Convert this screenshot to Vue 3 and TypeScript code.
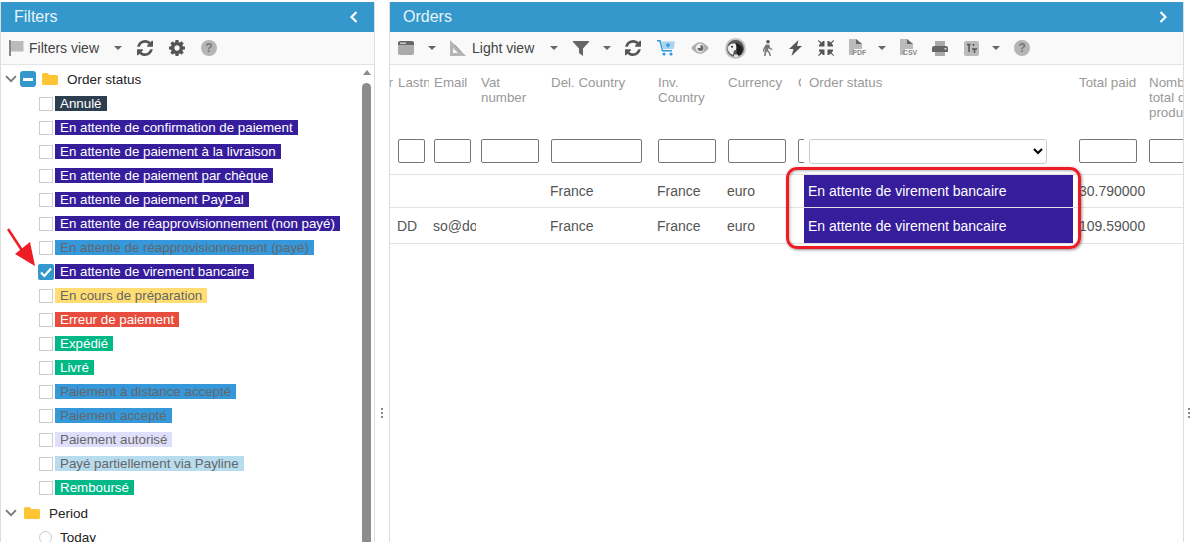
<template>
  <div class="page">
    <section class="panel filters">
      <header class="panel-head">
        <span>Filters</span>
        <svg class="head-chevron" width="8" height="12" viewBox="0 0 8 12"><path d="M6.5 1 1.5 6l5 5" fill="none" stroke="#fff" stroke-width="2.2" /></svg>
      </header>
      <div class="toolbar">
        <span class="tool flag">
          <svg width="15" height="16" viewBox="0 0 15 16"><path d="M0 0h2v16H0z" fill="#888" /><path d="M2 1h12.500v10.500H2z" fill="#bbb" /></svg>
        </span>
        <span class="view-name first">Filters view</span>
        <i class="caret" />
        <span class="tool">
          <svg width="16" height="16" viewBox="0 0 1536 1536"><path :d="refreshPath" fill="#555" /></svg>
        </span>
        <span class="tool">
          <svg width="16" height="16" viewBox="0 0 1536 1536"><path :d="gearPath" fill="#555" /></svg>
        </span>
        <span class="tool"><b class="help">?</b></span>
      </div>
      <div class="tree-wrap">
        <div class="tree">
          <div class="group-row">
            <svg class="tree-chevron" width="12" height="8" viewBox="0 0 12 8"><path d="M1 1.2 6 6.2l5-5" fill="none" stroke="#777" stroke-width="1.8" /></svg>
            <span class="check partial"><i /></span>
            <svg class="folder" width="16" height="12" viewBox="0 0 16 12"><path :d="folderPath" fill="#fdc536" /></svg>
            <span class="group-name">Order status</span>
          </div>
          <div v-for="s in statuses" :key="s.label" class="status-row">
            <span v-if="s.checked" class="check on">
              <svg width="16" height="16" viewBox="0 0 16 16"><path d="M3 8.500 6.400 12 13 4.500" fill="none" stroke="#fff" stroke-width="2.200" /></svg>
            </span>
            <span v-else class="check" />
            <span class="status-label" :class="s.kind">{{ s.label }}</span>
          </div>
          <div class="group-row period">
            <svg class="tree-chevron" width="12" height="8" viewBox="0 0 12 8"><path d="M1 1.2 6 6.2l5-5" fill="none" stroke="#777" stroke-width="1.8" /></svg>
            <svg class="folder" width="16" height="12" viewBox="0 0 16 12"><path :d="folderPath" fill="#fdc536" /></svg>
            <span class="group-name">Period</span>
          </div>
          <div class="radio-row"><i class="radio" /><span>Today</span></div>
        </div>
        <div class="scrollbar">
          <i class="scroll-up" />
          <i class="scroll-thumb" />
        </div>
      </div>
    </section>

    <div class="splitter"><i /><i /><i /></div>

    <section class="panel orders">
      <header class="panel-head">
        <span>Orders</span>
        <svg class="head-chevron" width="8" height="12" viewBox="0 0 8 12"><path d="M1.500 1l5 5-5 5" fill="none" stroke="#fff" stroke-width="2.200" /></svg>
      </header>
      <div class="toolbar">
        <span class="tool">
          <svg width="16" height="14" viewBox="0 0 16 14"><path d="M2 0h12a2 2 0 0 1 2 2v2.500H0V2a2 2 0 0 1 2-2z" fill="#666" /><path d="M0 5h16v7a2 2 0 0 1-2 2H2a2 2 0 0 1-2-2z" fill="#aaa" /><path d="M2 1.600h6v1.300H2z" fill="#ddd" /></svg>
        </span>
        <i class="caret near" />
        <span class="tool square">
          <svg width="16" height="16" viewBox="0 0 16 16"><path d="M0 0 16 16H0zM3 8v5h5z" fill="#b5b5b5" fill-rule="evenodd" /><path d="M5 5 11 12" stroke="#888" stroke-width=".8" /></svg>
        </span>
        <span class="view-name">Light view</span>
        <i class="caret" />
        <span class="tool">
          <svg width="16" height="15" viewBox="0 0 16 15"><path d="M0 0h16v1l-6 6.500V15l-4-3V7.500L0 1z" fill="#666" /></svg>
        </span>
        <i class="caret near" />
        <span class="tool">
          <svg width="16" height="16" viewBox="0 0 1536 1536"><path :d="refreshPath" fill="#555" /></svg>
        </span>
        <span class="tool">
          <svg width="18" height="16" viewBox="0 0 18 16"><path d="M0 .8h3l2.500 10h9.500" fill="none" stroke="#3498db" stroke-width="1.500" /><path d="M4 1.500h14l-1.500 7.500H5.500z" fill="#a9d3ee" /><path d="M10.300 3h1.400v1.500H13v1.400h-1.300v1.500h-1.400V5.900H9V4.500h1.300z" fill="#3498db" /><circle cx="7" cy="14" r="1.600" fill="#3498db" /><circle cx="14" cy="14" r="1.600" fill="#3498db" /></svg>
        </span>
        <span class="tool">
          <svg width="18" height="14" viewBox="0 0 18 14"><path d="M0 7q9-11.500 18 0-9 11.500-18 0z" fill="#b0b0b0" /><circle cx="9" cy="7" r="4.200" fill="#eee" /><path d="M9.500 4a3 3 0 1 1-3 3h3z" fill="#666" /></svg>
        </span>
        <span class="tool">
          <svg width="21" height="21" viewBox="0 0 21 21"><circle cx="10.500" cy="10.500" r="10.500" fill="#c4c4c4" /><circle cx="10.500" cy="10.500" r="8.500" fill="#555" /><path d="M2.500 10q2-5 7-4.500 2.500 1 2.500 4-1 3.500-3 3l-1 4.500Q3.500 15.500 2.500 10z" fill="#eee" /><path d="M11 5q5.500 1 7 6.500L15.500 17H12z" fill="#1e1e1e" /><circle cx="7" cy="8.700" r="1" fill="#222" /><path d="M9 16.500h4V19H9z" fill="#ddd" /></svg>
        </span>
        <span class="tool">
          <svg width="11" height="16" viewBox="0 0 11 16"><circle cx="6" cy="1.800" r="1.800" fill="#555" /><path d="M3.800 4.500h3.400l1 3.200 2.300 1.200-.6 1.100-2.800-1.300-.4-1-.6 2.600 2 2.300.9 3.400H7.600l-.9-2.900-2-2L3.500 16H2l1.300-7.400-1 1.200v2H1V9.200z" fill="#777" /></svg>
        </span>
        <span class="tool">
          <svg width="13" height="16" viewBox="0 0 13 16"><path d="M9.500 0 0 9h4.500L2.500 16 13 6H8z" fill="#555" /></svg>
        </span>
        <span class="tool">
          <svg width="16" height="16" viewBox="0 0 16 16"><path d="M.5 0 3.500 2.500 5 1h1.500v5.500H1V5l1.500-1.500L0 1zM15.500 0 16 1l-2.500 2.500L15 5v1.500H9.500V1H11l1.500 1.500zM1 9.500h5.500V15H5l-1.500-1.500L1 16l-1-.5L2.500 12.500 1 11zM9.500 9.500H15V11l-1.500 1.500L16 15.500l-.5.500-3-2.500L11 15H9.500z" fill="#555" /></svg>
        </span>
        <span class="tool doc">
          <svg width="16" height="18" viewBox="0 0 16 18"><path d="M0 0h7l6 5v5H5v6H0z" fill="#bbb" /><path d="M7 0l6 5H7z" fill="#666" /></svg>
          <em>PDF</em>
        </span>
        <i class="caret near tight" />
        <span class="tool doc csv">
          <svg width="16" height="18" viewBox="0 0 16 18"><path d="M0 0h7l6 5v5H5v6H0z" fill="#bbb" /><path d="M7 0l6 5H7z" fill="#666" /></svg>
          <em>CSV</em>
        </span>
        <span class="tool">
          <svg width="16" height="15" viewBox="0 0 16 15"><path d="M3 0h10v5H3zM3 10h10v5H3z" fill="#aaa" /><path d="M2 5h12a2 2 0 0 1 2 2v4H0V7a2 2 0 0 1 2-2z" fill="#666" /><path d="M12.500 7h2v1.500h-2z" fill="#ddd" /></svg>
        </span>
        <span class="tool">
          <svg width="15" height="15" viewBox="0 0 15 15"><rect width="15" height="15" rx="2" fill="#bbb" /><path d="M3 3.500h3.500M5 3.500V11M9.500 3v2M8 8h5M10.500 8v4" stroke="#555" stroke-width="1.500" fill="none" /></svg>
        </span>
        <i class="caret near tight" />
        <span class="tool"><b class="help">?</b></span>
      </div>

      <div class="grid">
        <div class="grid-row head-row">
          <div v-for="c in columns" :key="c.label" class="cell" :class="c.cls" :style="{ width: c.width + 'px' }">
            <span class="cell-text">{{ c.label }}</span>
          </div>
        </div>
        <div class="grid-row filter-row">
          <div v-for="c in columns" :key="c.label" class="cell" :class="c.cls" :style="{ width: c.width + 'px' }">
            <select v-if="c.select" class="filter-select"><option /></select>
            <input v-else-if="c.input" class="filter-input" type="text" :style="{ width: c.input + 'px' }" />
          </div>
        </div>
        <div v-for="(r, i) in rows" :key="i" class="grid-row data-row" :class="r.cls">
          <div v-for="c in columns" :key="c.label" class="cell" :class="[c.cls, { 'status-cell': c.select }]" :style="{ width: c.width + 'px' }">
            {{ r.values[c.label] }}
          </div>
        </div>
      </div>

      <div class="highlight" />
    </section>

    <div class="splitter edge"><i /><i /><i /></div>

    <svg class="arrow" width="30" height="42" viewBox="0 0 30 42">
      <path d="M1 2 20 31" stroke="#ee1c25" stroke-width="2.600" fill="none" />
      <path d="M28 39 23 15 8 27z" fill="#ee1c25" />
    </svg>
  </div>
</template>

<script setup lang="ts">
type Kind = 'dark' | 'purple' | 'blue' | 'yellow' | 'red' | 'green' | 'lavender' | 'sky'

interface Status {
  label: string
  kind: Kind
  checked?: boolean
}

interface Column {
  label: string
  width: number
  input?: number
  select?: boolean
  cls?: string
}

const folderPath = 'M0 1.500Q0 0 1.500 0h4L7.500 2H14.500Q16 2 16 3.500v7Q16 12 14.500 12h-13Q0 12 0 10.500z'

const refreshPath =
  'M1511 928q0 5-1 7-64 268-268 434.500t-478 166.500q-146 0-282.500-55t-243.500-157l-129 129q-19 19-45 19t-45-19-19-45v-448q0-26 19-45t45-19h448q26 0 45 19t19 45-19 45l-137 137q71 66 161 102t187 36q134 0 250-65t186-179q11-17 53-117 8-23 30-23h192q13 0 22.500 9.500t9.500 22.500zm25-800v448q0 26-19 45t-45 19h-448q-26 0-45-19t-19-45 19-45l138-138q-148-137-349-137-134 0-250 65t-186 179q-11 17-53 117-8 23-30 23h-199q-13 0-22.500-9.500t-9.500-22.500v-7q65-268 270-434.500t480-166.500q146 0 284 55.500t245 156.500l130-129q19-19 45-19t45 19 19 45z'

const gearPath =
  'M1024 768q0-106-75-181t-181-75-181 75-75 181 75 181 181 75 181-75 75-181zm512-109v222q0 12-8 23t-20 13l-185 28q-19 54-39 91 35 50 107 138 10 12 10 25t-9 23q-27 37-99 108t-94 71q-12 0-26-9l-138-108q-44 23-91 38-16 136-29 186-7 28-36 28h-222q-14 0-24.500-8.500t-11.500-21.500l-28-184q-49-16-90-37l-141 107q-10 9-25 9-14 0-25-11-126-114-165-168-7-10-7-23 0-12 8-23 15-21 51-66.500t54-70.500q-27-50-41-99l-183-27q-13-2-21-12.500t-8-23.500v-222q0-12 8-23t19-13l186-28q14-46 39-92-40-57-107-138-10-12-10-24 0-10 9-23 26-36 98.500-107.500t94.500-71.500q13 0 26 10l138 107q44-23 91-38 16-136 29-186 7-28 36-28h222q14 0 24.500 8.500t11.500 21.500l28 184q49 16 90 37l142-107q9-9 24-9 13 0 25 10 129 119 165 170 7 8 7 22 0 12-8 23-15 21-51 66.500t-54 70.500q26 50 41 98l183 28q13 2 21 12.500t8 23.500z'

const statuses: Status[] = [
  { label: 'Annulé', kind: 'dark' },
  { label: 'En attente de confirmation de paiement', kind: 'purple' },
  { label: 'En attente de paiement à la livraison', kind: 'purple' },
  { label: 'En attente de paiement par chèque', kind: 'purple' },
  { label: 'En attente de paiement PayPal', kind: 'purple' },
  { label: 'En attente de réapprovisionnement (non payé)', kind: 'purple' },
  { label: 'En attente de réapprovisionnement (payé)', kind: 'blue' },
  { label: 'En attente de virement bancaire', kind: 'purple', checked: true },
  { label: 'En cours de préparation', kind: 'yellow' },
  { label: 'Erreur de paiement', kind: 'red' },
  { label: 'Expédié', kind: 'green' },
  { label: 'Livré', kind: 'green' },
  { label: 'Paiement à distance accepté', kind: 'blue' },
  { label: 'Paiement accepté', kind: 'blue' },
  { label: 'Paiement autorisé', kind: 'lavender' },
  { label: 'Payé partiellement via Payline', kind: 'sky' },
  { label: 'Remboursé', kind: 'green' },
]

const columns: Column[] = [
  { label: 'Customer', width: 3, cls: 'clip-start' },
  { label: 'Lastname', width: 36, input: 27, cls: 'nowrap' },
  { label: 'Email', width: 47, input: 37 },
  { label: 'Vat number', width: 70, input: 58 },
  { label: 'Del. Country', width: 107, input: 91 },
  { label: 'Inv. Country', width: 70, input: 58 },
  { label: 'Currency', width: 70, input: 58 },
  { label: 'Carrier', width: 11, input: 27, cls: 'nowrap sliver' },
  { label: 'Order status', width: 271, select: true },
  { label: 'Total paid', width: 70, input: 58, cls: 'pad4' },
  { label: 'Nombre total de produits', width: 70, input: 58, cls: 'pad4' },
]

const rows = [
  {
    cls: 'first',
    values: {
      'Del. Country': 'France',
      'Inv. Country': 'France',
      Currency: 'euro',
      'Order status': 'En attente de virement bancaire',
      'Total paid': '30.790000',
    } as Record<string, string>,
  },
  {
    cls: 'second',
    values: {
      Lastname: 'DD',
      Email: 'so@dogmail.fr',
      'Del. Country': 'France',
      'Inv. Country': 'France',
      Currency: 'euro',
      'Order status': 'En attente de virement bancaire',
      'Total paid': '109.590000',
    } as Record<string, string>,
  },
]
</script>

<style>
html,
body {
  margin: 0;
  background: #fff;
  overflow: hidden;
}
</style>

<style scoped>
.page {
  display: flex;
  position: relative;
  width: 1191px;
  height: 542px;
  padding-top: 2px;
  box-sizing: border-box;
  overflow: hidden;
  font-family: "Liberation Sans", Arial, sans-serif;
  font-size: 13.33px;
  color: #333;
}

.panel {
  position: relative;
  display: flex;
  flex-direction: column;
  height: 540px;
  overflow: hidden;
  border-left: 1px solid #ddd;
  border-right: 1px solid #ddd;
  box-sizing: border-box;
}

.filters {
  width: 375px;
}

.orders {
  width: 795px;
}

.panel-head {
  display: flex;
  align-items: center;
  justify-content: space-between;
  flex: none;
  height: 30px;
  margin: 0 -1px;
  padding: 0 17px 0 14px;
  background: #3498cc;
  color: #e6f3fa;
  font-size: 16px;
}

.head-chevron {
  flex: none;
}

.toolbar {
  display: flex;
  align-items: center;
  flex: none;
  height: 33px;
  background: #f9f9f9;
  border-bottom: 1px solid #e2e2e2;
  box-sizing: border-box;
}

.tool {
  display: flex;
  align-items: center;
  justify-content: center;
  position: relative;
  padding: 0 8px;
}

.flag {
  padding-right: 5px;
}

.square {
  padding-right: 6px;
}

.view-name {
  font-size: 14px;
  color: #444;
  margin-right: 16px;
}

.view-name.first {
  margin-right: 15px;
}

.caret {
  flex: none;
  width: 0;
  height: 0;
  margin-right: 7px;
  border-left: 4px solid transparent;
  border-right: 4px solid transparent;
  border-top: 4px solid #666;
}

.caret.near {
  margin: 0 6px;
}

.caret.near.tight {
  margin: 0 6px 0 5px;
}

.help {
  display: block;
  width: 16px;
  height: 16px;
  border-radius: 50%;
  background: #b5b5b5;
  color: #777;
  font-size: 12px;
  line-height: 16px;
  text-align: center;
}

.doc {
  padding-left: 7px;
}

.doc.csv {
  padding-left: 8px;
}

.doc svg {
  display: block;
}

.doc em {
  position: absolute;
  right: 7px;
  bottom: 0;
  font-style: normal;
  font-weight: bold;
  font-size: 7px;
  line-height: 8px;
  color: #888;
}

.tree-wrap {
  display: flex;
  flex: 1;
  min-height: 0;
}

.tree {
  flex: 1;
  padding-top: 2px;
}

.group-row {
  display: flex;
  align-items: center;
  height: 24px;
  padding-left: 4px;
  color: #222;
  font-size: 13.5px;
}

.tree-chevron {
  flex: none;
}

.check {
  display: block;
  flex: none;
  width: 12px;
  height: 12px;
  margin-top: 2px;
  border: 1px solid #ccc;
  background: #fff;
}

.check.partial {
  display: flex;
  align-items: center;
  justify-content: center;
  width: 16px;
  height: 16px;
  margin: 0 6px 0 3px;
  border: 0;
  border-radius: 3px;
  background: #3498cc;
}

.check.partial i {
  width: 10px;
  height: 3px;
  background: #fff;
}

.check.on {
  width: 16px;
  height: 16px;
  margin: 1px -1px 0 -1px;
  border: 0;
  border-radius: 2px;
  background: #3498cc;
}

.check.on svg {
  display: block;
}

.group-name {
  margin-left: 9px;
}

.status-row {
  display: flex;
  align-items: center;
  height: 24px;
  padding-left: 38px;
  gap: 2px;
}

.status-label {
  height: 15px;
  padding: 0 5px;
  line-height: 15px;
  white-space: nowrap;
}

.dark { background: #2c3e50; color: #fff; }
.purple { background: #351d9c; color: #fff; }
.blue { background: #3498db; color: #666; }
.yellow { background: #ffdd73; color: #666; }
.red { background: #e74c3c; color: #fff; }
.green { background: #01b887; color: #fff; }
.lavender { background: #e0dffb; color: #666; }
.sky { background: #b7dcee; color: #666; }

.period {
  height: 28px;
}

.period .folder {
  margin-left: 7px;
}

.radio-row {
  display: flex;
  align-items: center;
  gap: 8px;
  height: 20px;
  padding-left: 38px;
  font-size: 13.5px;
  color: #222;
}

.radio {
  width: 11px;
  height: 11px;
  border: 1px solid #ccc;
  border-radius: 50%;
}

.scrollbar {
  display: flex;
  flex-direction: column;
  align-items: center;
  flex: none;
  width: 9px;
  margin-right: 3px;
  padding-top: 5px;
}

.scroll-up {
  flex: none;
  width: 0;
  height: 0;
  border-left: 4.5px solid transparent;
  border-right: 4.5px solid transparent;
  border-bottom: 5px solid #8c8c8c;
  margin-bottom: 8px;
}

.scroll-thumb {
  flex: 1;
  width: 9px;
  border-radius: 5px 5px 0 0;
  background: #8c8c8c;
}

.splitter {
  display: flex;
  flex-direction: column;
  align-items: center;
  gap: 2px;
  flex: none;
  width: 14px;
  height: 540px;
  padding-top: 406px;
  box-sizing: border-box;
}

.splitter i {
  width: 2px;
  height: 2px;
  background: #888;
}

.splitter.edge {
  width: 7px;
  padding-left: 3px;
}

.grid {
  flex: 1;
  overflow: hidden;
}

.grid-row {
  display: flex;
  width: 900px;
  border-bottom: 1px solid #e2e2e2;
  box-sizing: border-box;
}

.head-row {
  height: 67px;
  border-bottom: 0;
  color: #999;
}

.filter-row {
  height: 43px;
  align-items: flex-start;
  padding-top: 7px;
}

.data-row {
  color: #555;
  font-size: 14px;
}

.data-row.first {
  height: 33px;
}

.data-row.second {
  height: 36px;
}

.cell {
  flex: none;
  padding-left: 4px;
  padding-right: 1px;
  box-sizing: border-box;
  overflow: hidden;
  white-space: nowrap;
  display: flex;
  align-items: center;
}

.cell.clip-start {
  padding: 0;
}

.head-row .cell {
  align-items: flex-start;
  padding: 10px 1px 0 5px;
  white-space: normal;
  line-height: 15px;
}

.filter-row .cell {
  padding-left: 5px;
}

.filter-row .cell.clip-start {
  padding: 0;
}

.head-row .cell.pad4,
.filter-row .cell.pad4 {
  padding-left: 4px;
}

.head-row .cell.nowrap {
  white-space: nowrap;
}

.head-row .clip-start {
  padding: 10px 0 0;
  justify-content: flex-end;
  white-space: nowrap;
}

.cell-text {
  display: block;
}

.head-row .sliver {
  padding-right: 3px;
}

.head-row .sliver .cell-text {
  overflow: hidden;
}

.filter-input {
  flex: none;
  height: 24px;
  margin: 0;
  padding: 0;
  box-sizing: border-box;
  border: 1px solid #767676;
  border-radius: 2px;
  background: #fff;
}

.filter-select {
  width: 238px;
  height: 25px;
  margin: 0;
  box-sizing: border-box;
  border: 1px solid #ccc;
  border-radius: 3px;
  background: #fff;
}

.status-cell {
  background: #351d9c;
  background-clip: padding-box;
  border-right: 2px solid transparent;
  color: #fff;
}

.highlight {
  position: absolute;
  left: 396px;
  top: 165px;
  width: 295px;
  height: 82px;
  box-sizing: border-box;
  border: 3px solid #ee1c25;
  border-radius: 11px;
  box-shadow: 1px 1px 3px rgba(0, 0, 0, 0.45), inset 1px 1px 3px rgba(0, 0, 0, 0.3);
  pointer-events: none;
}

.arrow {
  position: absolute;
  left: 7px;
  top: 227px;
}
</style>
